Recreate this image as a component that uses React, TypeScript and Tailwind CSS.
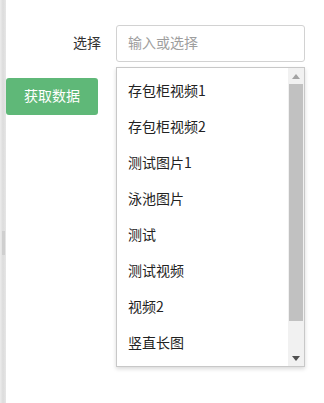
import React from 'react'

const OPTIONS = [
  '存包柜视频1',
  '存包柜视频2',
  '测试图片1',
  '泳池图片',
  '测试',
  '测试视频',
  '视频2',
  '竖直长图',
]

const FONT = "font-['Microsoft_YaHei','Noto_Sans_CJK_SC',sans-serif]"

export default function App() {
  return (
    <div className={`flex h-[403px] w-[324px] overflow-hidden bg-white ${FONT}`}>
      <div className="relative w-[6px] shrink-0 bg-gradient-to-r from-[#ececec] via-[#dcdcdc] to-[#e6e6e6]">
        <div className="absolute left-[2px] top-[231px] h-[24px] w-[3px] bg-[#cfcfcf]" />
      </div>

      <div className="flex-1">
        <div className="flex items-center pt-[25px]">
          <label className="w-[95px] pb-[3px] text-right text-[14px] text-[#333]">选择</label>
          <div className="relative ml-[15px]">
            <input
              placeholder="输入或选择"
              className="h-[37px] w-[189px] rounded-[3px] border border-[#d2d2d2] bg-white px-[11px] pb-[3px] text-[14px] text-[#333] outline-none placeholder:text-[#9e9e9e]"
            />
            <Dropdown />
          </div>
        </div>

        <button
          type="button"
          className="mt-[16px] h-[37px] w-[92px] rounded-[3px] bg-[#5fb878] pb-[2px] text-[14px] text-white"
        >
          获取数据
        </button>
      </div>
    </div>
  )
}

function Dropdown() {
  return (
    <div className="absolute left-0 top-[42px] flex h-[300px] w-[189px] border border-[#c8c8c8] bg-white shadow-[0_2px_4px_rgba(0,0,0,0.15)]">
      <ul className="flex-1 pt-[4px]">
        {OPTIONS.map((item) => (
          <li key={item} className="flex h-[36px] items-center pl-[11px] text-[14px] text-[#222]">
            {item}
          </li>
        ))}
      </ul>
      <div className="flex w-[16px] flex-col bg-[#f1f1f1]">
        <div className="flex h-[16px] items-center justify-center">
          <svg width="8" height="5" viewBox="0 0 8 5">
            <path d="M0 5 L4 0 L8 5 Z" fill="#a3a3a3" />
          </svg>
        </div>
        <div className="mx-[1px] h-[237px] bg-[#c1c1c1]" />
        <div className="flex-1" />
        <div className="flex h-[16px] items-center justify-center">
          <svg width="8" height="5" viewBox="0 0 8 5">
            <path d="M0 0 L4 5 L8 0 Z" fill="#505050" />
          </svg>
        </div>
      </div>
    </div>
  )
}
